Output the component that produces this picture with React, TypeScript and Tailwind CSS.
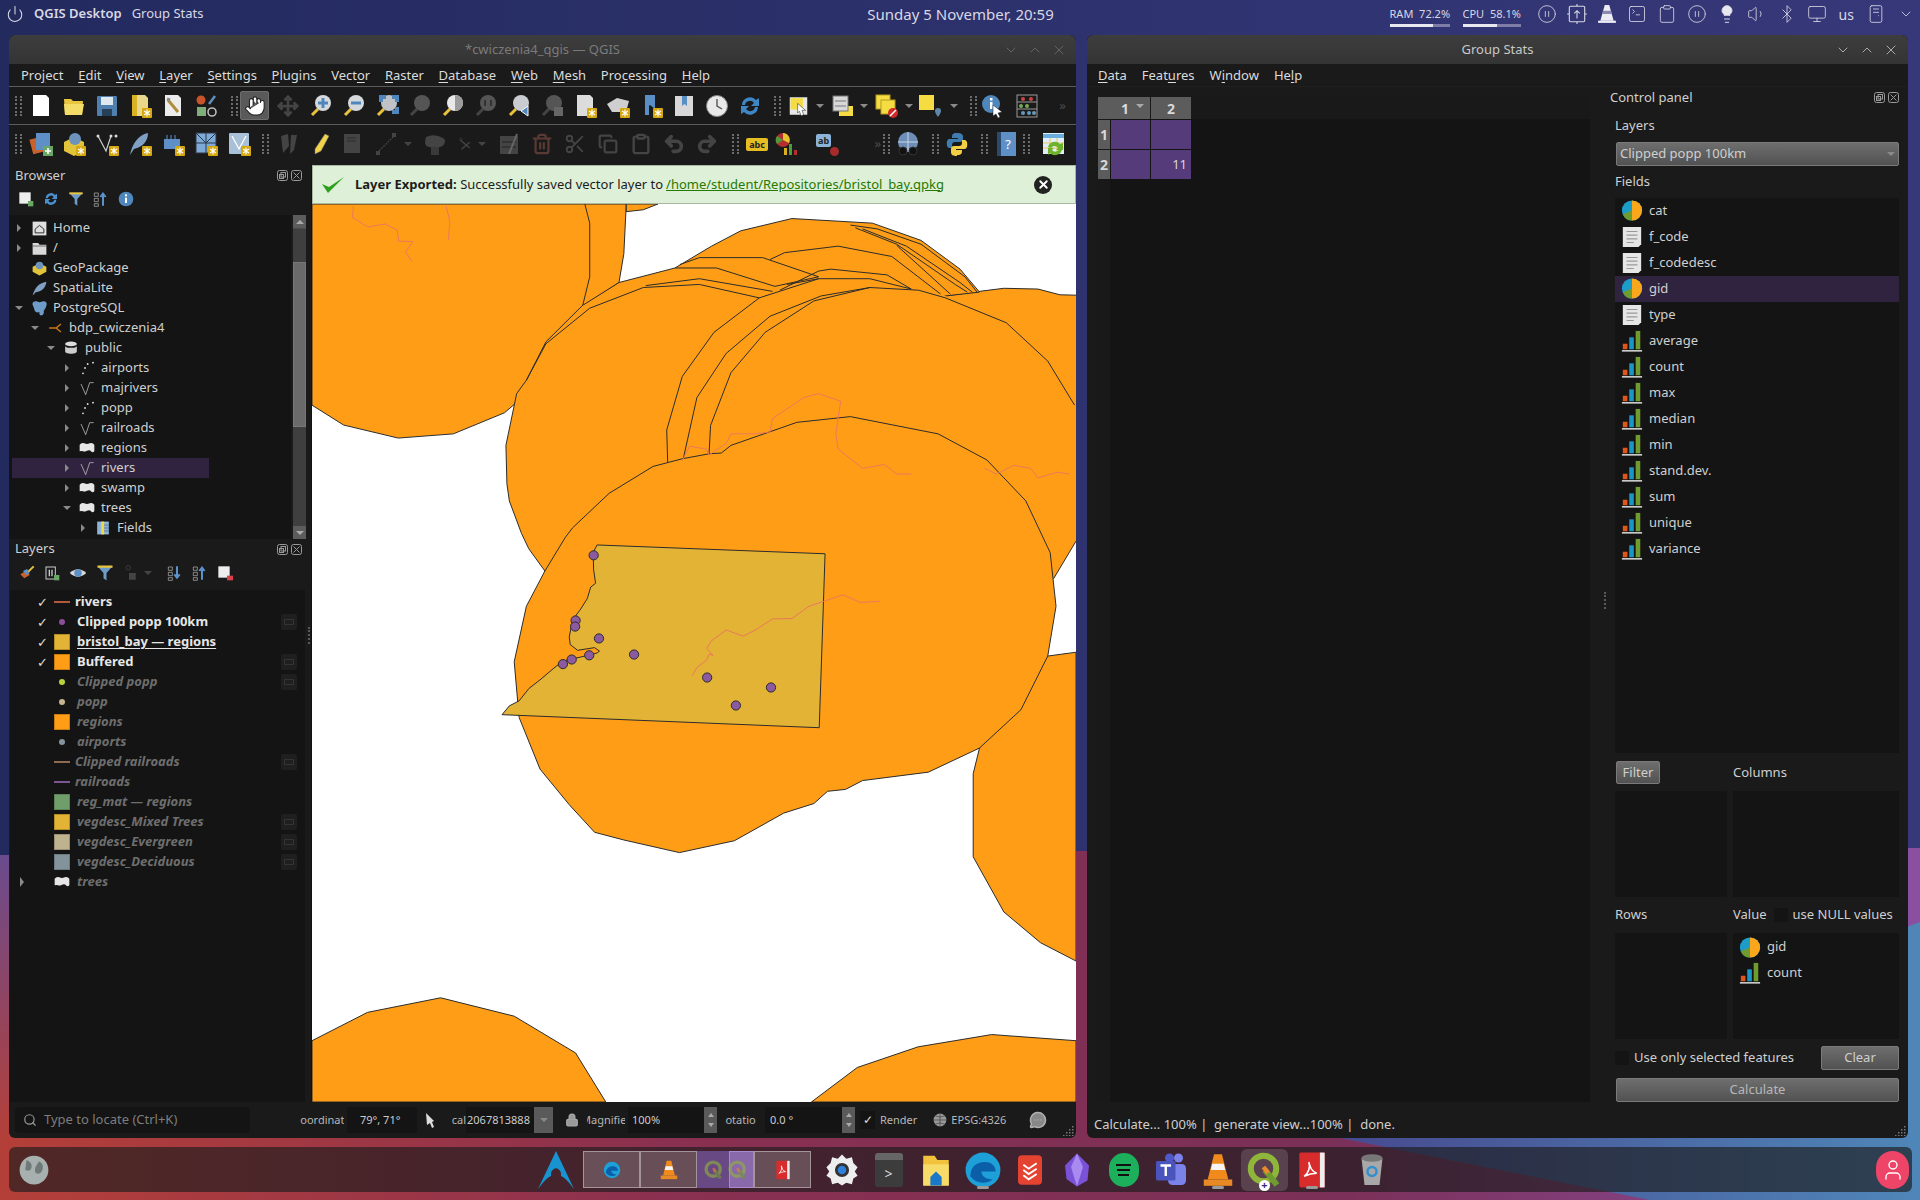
import type { ReactNode } from "react";
import {
  Bluetooth,
  ChevronDown,
  ChevronUp,
  CirclePause,
  Clipboard,
  Copy,
  Hand,
  Lightbulb,
  Lock,
  MessageCircleMore,
  Monitor,
  Move,
  PcCase,
  Power,
  Redo2,
  Scissors,
  Search,
  SquareTerminal,
  Trash2,
  Undo2,
  User,
  Volume1,
  X,
} from "lucide-react";

const dim = "#444444";

const S = ({ children, size = 24, className }: { children: ReactNode; size?: number; className?: string }) => (
  <svg viewBox="0 0 24 24" width={size} height={size} className={className}>
    {children}
  </svg>
);

const Star = () => (
  <g>
    <rect x="14" y="14" width="10" height="10" rx="1" fill="#d6a80f" />
    <path d="M19 15.5v7M16 17l6 4M22 17l-6 4" stroke="#fff" strokeWidth="1.2" />
  </g>
);

const Mag = ({ glass = "#c9ccd0", handle = "#e8c33a", children }: { glass?: string; handle?: string; children?: ReactNode }) => (
  <S>
    <path d="M9 15l-6 6" stroke={handle} strokeWidth="3" />
    <circle cx="14" cy="9" r="8" fill={glass} />
    {children}
  </S>
);

const Doc = ({ fill = "#ececec", children }: { fill?: string; children?: ReactNode }) => (
  <S>
    <path d="M4 1h13l3 3v18H4z" fill={fill} />
    {children}
  </S>
);

const Handle = () => <div className="w-[7px] h-[20px] border-x-2 border-dotted border-[#6c6c6c]" />;

const Slot = ({ w = "w-[33px]", children, end }: { w?: string; children?: ReactNode; end?: boolean }) => (
  <div className={`${w} h-[30px] shrink-0 flex items-center ${end ? "justify-end" : "justify-center"}`}>{children}</div>
);

const Arrow = () => <div className="border-x-[4px] border-x-transparent border-t-[4px] border-t-[#8a8a8a]" />;

const Chevrons = () => <span className="text-[#4c4c4c] text-[13px]">»</span>;

const Pie = () => (
  <S size={23}>
    <circle cx="12" cy="12" r="11" fill="#1c9cc8" />
    <path d="M12 1a11 11 0 0 1 0 22z" fill="#fba71b" />
    <path d="M12 12v11a11 11 0 0 1-10-7z" fill="#6f9c2e" />
  </S>
);

const PageSmall = () => (
  <S size={24}>
    <path d="M2 1h20v19l-3 3H2z" fill="#e6e6e6" />
    <path d="M6 6h12M6 10h12M6 14h12M6 18h8" stroke="#9a9a9a" strokeWidth="1.2" />
  </S>
);

const Bars = () => (
  <S size={24}>
    <rect x="2" y="15" width="5" height="6" fill="#e0561b" />
    <rect x="9" y="8" width="5" height="13" fill="#1b97c6" />
    <rect x="16" y="1" width="5" height="20" fill="#6f9c2e" />
    <rect x="1" y="22" width="22" height="1.5" fill="#eee" />
  </S>
);

const Dots = () => (
  <S size={16}>
    <circle cx="6" cy="20" r="1.4" fill="#ddd" />
    <circle cx="9" cy="12" r="1.4" fill="#ddd" />
    <circle cx="13" cy="6" r="1.4" fill="#ddd" />
    <circle cx="21" cy="4" r="1.4" fill="#ddd" />
  </S>
);

const Vee = () => (
  <S size={16}>
    <path d="M3 6l7 16 6-18 6 0" fill="none" stroke="#bbb" strokeWidth="1.2" />
  </S>
);

const Blob = ({ size = 16 }: { size?: number }) => (
  <S size={size}>
    <path d="M1 7q3-4 7-2t8 0 7 2v10q-3 3-5 0t-6-1-6 1-5 0z" fill="#e6e6e6" />
  </S>
);

const FloatIcons = () => (
  <div className="flex gap-[3px]">
    <svg width="11" height="11" viewBox="0 0 11 11" fill="none" stroke="#9a9a9a">
      <rect x=".5" y=".5" width="10" height="10" rx="2" />
      <rect x="4" y="2.5" width="4.5" height="4.5" />
      <rect x="2.5" y="4.5" width="4" height="4" />
    </svg>
    <svg width="11" height="11" viewBox="0 0 11 11" fill="none" stroke="#9a9a9a">
      <rect x=".5" y=".5" width="10" height="10" rx="2" />
      <path d="M2.5 2.5l6 6M8.5 2.5l-6 6" />
    </svg>
  </div>
);

const Menu = ({ items, className }: { items: [string, string, string][]; className: string }) => (
  <div className={`flex text-[13px] text-[#dcdcdc] ${className}`}>
    {items.map(([a, u, b]) => (
      <span key={a + u + b}>
        {a}
        <span className="underline underline-offset-2">{u}</span>
        {b}
      </span>
    ))}
  </div>
);

const TopBar = () => (
  <div className="h-[35px] flex items-center pb-[7px] text-[13px] text-[#d8d8e4] relative">
    <Power size={18} strokeWidth={1.4} className="ml-[6px] text-[#d8d8e4]" />
    <span className="ml-[10px] font-semibold">QGIS Desktop</span>
    <span className="ml-[10px]">Group Stats</span>
    <span className="ml-[657px] w-[200px] text-center text-[15px] whitespace-nowrap">Sunday 5 November, 20:59</span>
    <div className="ml-[329px] w-[60px] h-[28px] mt-[7px] flex flex-col">
      <span className="text-[11px] leading-[19px] whitespace-nowrap">RAM&nbsp; 72.2%</span>
      <div className="h-[3px] bg-[#7d7da8] mt-[1px]">
        <div className="h-full w-[43px] bg-[#e8e8f0]" />
      </div>
    </div>
    <div className="ml-[13px] w-[58px] h-[28px] mt-[7px] flex flex-col">
      <span className="text-[11px] leading-[19px] whitespace-nowrap">CPU&nbsp; 58.1%</span>
      <div className="h-[3px] bg-[#7d7da8] mt-[1px]">
        <div className="h-full w-[34px] bg-[#e8e8f0]" />
      </div>
    </div>
    <div className="ml-[16px] flex items-center gap-[10px]">
      <CirclePause size={20} strokeWidth={1} />
      <svg width="20" height="22" viewBox="0 0 18 20" fill="none" stroke="#d8d8e4">
        <rect x="2" y="3" width="14" height="14" rx="1" />
        <path d="M9 14V7M6.5 9.5L9 7l2.5 2.5M9 1v2M9 17v2M0 10h2M16 10h2" />
      </svg>
      <svg width="20" height="20" viewBox="0 0 18 18">
        <path d="M7 1h4l4 14H3z" fill="#ececf4" />
        <path d="M5.5 6h7l1 3h-9z" fill="#8a8ab0" />
        <rect x="1" y="15" width="16" height="2" fill="#ececf4" />
      </svg>
      <SquareTerminal size={20} strokeWidth={1} />
      <Clipboard size={20} strokeWidth={1} />
      <CirclePause size={20} strokeWidth={1} />
      <Lightbulb size={20} strokeWidth={1.2} fill="#e8e8f0" />
      <Volume1 size={20} strokeWidth={1} />
      <Bluetooth size={20} strokeWidth={1} />
      <Monitor size={20} strokeWidth={1} />
      <span className="text-[14px] ml-[2px]">us</span>
      <PcCase size={20} strokeWidth={1} className="ml-[2px]" />
      <ChevronDown size={16} strokeWidth={1.2} className="ml-[2px]" />
    </div>
  </div>
);

const TitleBar = ({ title, dimmed }: { title: string; dimmed?: boolean }) => (
  <div className="h-[29px] shrink-0 bg-gradient-to-b from-[#3d3d3d] to-[#343434] rounded-t-md flex items-center relative">
    <span className={`flex-1 text-center text-[13px] ${dimmed ? "text-[#7a7a7a]" : "text-[#c8c8c8]"}`}>{title}</span>
    <div className={`absolute right-[9px] flex gap-[8px] ${dimmed ? "text-[#707070]" : "text-[#c8c8c8]"}`}>
      <ChevronDown size={16} strokeWidth={1.2} />
      <ChevronUp size={16} strokeWidth={1.2} />
      <X size={16} strokeWidth={1.2} />
    </div>
  </div>
);

const Toolbar1 = () => (
  <div className="h-[38px] flex items-center pl-[3px] border-b border-[#5c5c5c]">
    <Slot w="w-[12px]"><Handle /></Slot>
    <Slot><Doc fill="#fff" /></Slot>
    <Slot>
      <S><path d="M2 5h7l2 2h10l-1 14H3z" fill="#e8c53f" /><path d="M2 10h20l-2 11H3z" fill="#f4dc68" /></S>
    </Slot>
    <Slot>
      <S><rect x="2" y="2" width="20" height="20" rx="1" fill="#4f7fae" /><rect x="6" y="3" width="12" height="8" fill="#dfe7ef" /><rect x="7" y="15" width="10" height="7" fill="#283f58" /></S>
    </Slot>
    <Slot>
      <Doc fill="#ead88a"><rect x="4" y="1" width="5" height="21" fill="#d8b425" /><Star /></Doc>
    </Slot>
    <Slot>
      <Doc><path d="M7 6l10 12" stroke="#b08d3a" strokeWidth="3" /><path d="M6 5l3 1" stroke="#888" strokeWidth="3" /></Doc>
    </Slot>
    <Slot>
      <S><circle cx="7" cy="6" r="4.5" fill="#c9532b" /><path d="M15 10l6-8" stroke="#5f8fbe" strokeWidth="2.5" /><rect x="3" y="13" width="9" height="9" fill="#7fae7a" /><circle cx="18" cy="18" r="4" fill="none" stroke="#bbb" strokeWidth="1.6" /></S>
    </Slot>
    <Slot w="w-[16px]" end><Handle /></Slot>
    <Slot>
      <div className="w-[29px] h-[29px] rounded-[2px] bg-[#5a5a5a] border border-[#6d6d6d] flex items-center justify-center">
        <Hand size={22} fill="#fff" stroke="#222" strokeWidth={1.2} />
      </div>
    </Slot>
    <Slot><Move size={22} color={dim} strokeWidth={3} /></Slot>
    <Slot><Mag glass="#d6d9dc"><path d="M14 4v10M9 9h10" stroke="#4f87bd" strokeWidth="3" /></Mag></Slot>
    <Slot><Mag glass="#d6d9dc"><path d="M9 9h10" stroke="#4f87bd" strokeWidth="3" /></Mag></Slot>
    <Slot>
      <Mag glass="#bfc3c7"><path d="M4 1h7v4H8v3H4zM24 1h-7v4h3v3h4zM24 20h-7v-4h3v-3h4z" fill="#4f87bd" /></Mag>
    </Slot>
    <Slot><Mag glass="#555" handle={dim} /></Slot>
    <Slot><Mag glass="#e9e9e9"><path d="M14 1a8 8 0 0 1 0 16z" fill="#9c9c9c" /></Mag></Slot>
    <Slot><Mag glass="#555" handle={dim}><path d="M11 6v6M17 6v6" stroke="#333" strokeWidth="2" /></Mag></Slot>
    <Slot><Mag glass="#c9ccd0"><path d="M21 12l-7 5 7 5z" fill="#4f87bd" stroke="#fff" /></Mag></Slot>
    <Slot><Mag glass="#555" handle={dim}><rect x="14" y="13" width="9" height="9" fill="#666" /></Mag></Slot>
    <Slot><Doc fill="#dcdcdc"><Star /></Doc></Slot>
    <Slot><S><path d="M1 10l10-6 12 3-3 11H6z" fill="#cfcfcf" /><Star /></S></Slot>
    <Slot><S><path d="M6 1h10v14l-5-4-5 4z" fill="#5a8fc5" /><path d="M6 1h4v20H6z" fill="#5a8fc5" /><Star /></S></Slot>
    <Slot><S><path d="M3 2h18v20H3z" fill="#d8d8d8" /><path d="M10 2h5v10l-2.5-2-2.5 2z" fill="#5a8fc5" /></S></Slot>
    <Slot><S><circle cx="12" cy="12" r="10.5" fill="#e8e8e8" stroke="#888" /><path d="M12 5v7l5 3" stroke="#555" fill="none" strokeWidth="1.4" /></S></Slot>
    <Slot><S><path d="M4 11a8 8 0 0 1 14-5l3-2v8h-8l3-3a5 5 0 0 0-9 2zM20 13a8 8 0 0 1-14 5l-3 2v-8h8l-3 3a5 5 0 0 0 9-2z" fill="#3f86c6" /></S></Slot>
    <Slot w="w-[22px]"><Handle /></Slot>
    <Slot w="w-[21px]"><S><rect x="2" y="2" width="20" height="20" fill="#e8e8e8" /><rect x="3" y="3" width="14" height="13" fill="#f5dc42" /><path d="M11 9l9 8-4 0 2 5-3 1-2-5-2 2z" fill="#fff" stroke="#222" strokeWidth=".6" /></S></Slot>
    <Slot w="w-[22px]"><Arrow /></Slot>
    <Slot w="w-[24px]"><S><rect x="8" y="12" width="14" height="10" fill="#f5dc42" /><rect x="2" y="2" width="15" height="15" fill="#d8d8d8" stroke="#777" /><path d="M4 7h11M4 12h11" stroke="#777" /></S></Slot>
    <Slot w="w-[18px]"><Arrow /></Slot>
    <Slot w="w-[28px]"><S><rect x="1" y="1" width="14" height="14" fill="#f5dc42" stroke="#b59b1e" /><rect x="6" y="6" width="14" height="14" fill="#f5dc42" stroke="#b59b1e" /><circle cx="18" cy="19" r="5" fill="#d02a2a" /><path d="M15 22l6-6" stroke="#fff" strokeWidth="1.4" /></S></Slot>
    <Slot w="w-[16px]"><Arrow /></Slot>
    <Slot w="w-[26px]"><S><rect x="1" y="1" width="15" height="15" fill="#f5dc42" /><path d="M20 14a3 3 0 0 1 3 3c0 2-3 6-3 6s-3-4-3-6a3 3 0 0 1 3-3z" fill="#5f87a8" /></S></Slot>
    <Slot w="w-[22px]"><Arrow /></Slot>
    <Slot w="w-[16px]"><Handle /></Slot>
    <Slot w="w-[24px]"><S><circle cx="10" cy="10" r="9" fill="#4f87bd" /><rect x="9" y="8" width="2.5" height="7" fill="#fff" /><rect x="9" y="4" width="2.5" height="2.5" fill="#fff" /><path d="M12 11l9 7-4 1 2 4-2 1-2-4-3 2z" fill="#fff" stroke="#222" strokeWidth=".5" /></S></Slot>
    <Slot w="w-[44px]">
      <S><rect x="2" y="1" width="20" height="22" fill="none" stroke="#999" /><path d="M2 8h20M2 15h20" stroke="#999" /><circle cx="8" cy="5" r="2" fill="#c44" /><circle cx="16" cy="5" r="2" fill="#c44" /><circle cx="6" cy="12" r="2" fill="#7a5" /><circle cx="12" cy="12" r="2" fill="#7a5" /><circle cx="8" cy="19" r="2" fill="#69b" /><circle cx="14" cy="19" r="2" fill="#69b" /><circle cx="19" cy="19" r="2" fill="#69b" /></S>
    </Slot>
    <Slot w="w-[27px]"><Chevrons /></Slot>
  </div>
);

const Toolbar2 = () => (
  <div className="h-[41px] pb-[2px] flex items-center pl-[3px] border-t border-[#5c5c5c] -mt-[1px]">
    <Slot w="w-[12px]"><Handle /></Slot>
    <Slot><S><rect x="2" y="6" width="13" height="15" fill="#c9622a" transform="rotate(-15 8 13)" /><rect x="7" y="1" width="14" height="17" fill="#5e8fc7" /><rect x="14" y="14" width="10" height="10" fill="#6aa765" /><path d="M19 16v6M16 19h6" stroke="#fff" strokeWidth="1.6" /></S></Slot>
    <Slot><S><path d="M2 10l10-5 10 5v9l-10 5-10-5z" fill="#e2c43a" /><circle cx="13" cy="7" r="6" fill="#6d93bd" /><Star /></S></Slot>
    <Slot><S><path d="M3 4l8 15 5-15" fill="none" stroke="#cfcfcf" strokeWidth="1.2" /><circle cx="3" cy="4" r="1.5" fill="#ddd" /><circle cx="16" cy="4" r="1.5" fill="#ddd" /><circle cx="21" cy="4" r="1.5" fill="#ddd" /><Star /></S></Slot>
    <Slot><S><path d="M2 23C4 12 10 3 20 1c0 8-5 14-14 16z" fill="#7f9fc3" /><Star /></S></Slot>
    <Slot><S><rect x="3" y="7" width="16" height="10" fill="#5e8fc7" /><path d="M6 3v4M10 3v4M14 3v4" stroke="#5e8fc7" /><Star /></S></Slot>
    <Slot><S><rect x="2" y="1" width="20" height="20" fill="#7faad6" stroke="#334" /><path d="M2 11h20M12 1v20M2 1l10 10M22 1l-10 10" stroke="#26384d" /><Star /></S></Slot>
    <Slot><S><rect x="2" y="1" width="20" height="21" rx="1" fill="#a9c0d9" /><path d="M5 4l7 13 7-13" stroke="#fff" fill="none" strokeWidth="1.3" /><Star /></S></Slot>
    <Slot w="w-[20px]"><Handle /></Slot>
    <Slot w="w-[27px]"><S><path d="M4 4l7-2 1 12-6 7zM14 3l6 0-3 15-4 4z" fill={dim} /></S></Slot>
    <Slot w="w-[36px]"><S><path d="M7 22l0-5L17 2l4 2-8 15z" fill="#f0d34a" stroke="#777" strokeWidth=".5" /></S></Slot>
    <Slot w="w-[30px]"><S><rect x="3" y="2" width="16" height="19" fill={dim} /><path d="M6 6h9M6 9h9" stroke="#2a2a2a" /></S></Slot>
    <Slot w="w-[36px]"><S><path d="M3 21L21 3" stroke={dim} strokeWidth="1.2" strokeDasharray="2 1" /><rect x="2" y="19" width="4" height="4" fill={dim} /><rect x="18" y="1" width="4" height="4" fill={dim} /></S></Slot>
    <Slot w="w-[8px]"><div className="border-x-[4px] border-x-transparent border-t-[4px] border-t-[#444]" /></Slot>
    <Slot w="w-[46px]"><S><path d="M3 5q6-3 12-1t7 4q0 6-5 7t-11 0-3-10z" fill={dim} /><rect x="8" y="15" width="8" height="8" fill="#3a3a3a" /></S></Slot>
    <Slot w="w-[14px]"><S><path d="M4 5l16 14M20 9l-14 12" stroke={dim} strokeWidth="2.4" /><circle cx="5" cy="4" r="2" fill="none" stroke={dim} /></S></Slot>
    <Slot w="w-[20px]"><div className="border-x-[4px] border-x-transparent border-t-[4px] border-t-[#444]" /></Slot>
    <Slot><S><rect x="3" y="4" width="18" height="18" fill={dim} /><path d="M5 10h14M5 15h14" stroke="#222" /><path d="M12 22L20 2" stroke="#666" strokeWidth="2" /></S></Slot>
    <Slot><Trash2 size={22} color="#5a3a34" strokeWidth={2.4} /></Slot>
    <Slot><Scissors size={22} color={dim} /></Slot>
    <Slot><Copy size={20} color={dim} strokeWidth={2.6} /></Slot>
    <Slot><Clipboard size={22} color={dim} strokeWidth={2.6} /></Slot>
    <Slot><Undo2 size={22} color={dim} strokeWidth={4} /></Slot>
    <Slot><Redo2 size={22} color={dim} strokeWidth={4} /></Slot>
    <Slot w="w-[24px]"><Handle /></Slot>
    <Slot w="w-[14px]">
      <div className="shrink-0 h-[13px] px-[3px] ml-[6px] bg-[#e6bd22] rounded-[2px] text-[9px] leading-[13px] font-bold text-[#222]">abc</div>
    </Slot>
    <Slot w="w-[50px]"><S><circle cx="9" cy="8" r="7" fill="#b52f2f" /><path d="M9 1a7 7 0 0 1 6 10L9 8z" fill="#e6c42b" /><path d="M9 8L3 12a7 7 0 0 1 0-8z" fill="#4f9b3b" /><rect x="10" y="16" width="3" height="7" fill="#d8b020" /><rect x="15" y="12" width="3" height="11" fill="#4f9b3b" /><rect x="20" y="18" width="3" height="5" fill="#b52f2f" /></S></Slot>
    <Slot w="w-[34px]">
      <div className="relative w-[24px] h-[24px]">
        <div className="absolute left-0 top-[2px] h-[13px] px-[2px] bg-[#8cb4d8] rounded-[2px] text-[9px] leading-[13px] font-bold text-[#222]">ab</div>
        <div className="absolute right-[1px] bottom-0 w-[9px] h-[9px] rounded-full bg-[#a62b2b]" />
      </div>
    </Slot>
    <Slot w="w-[36px]" end><Chevrons /></Slot>
    <Slot w="w-[10px]"><Handle /></Slot>
    <Slot w="w-[34px]"><S><circle cx="12" cy="10" r="10" fill="#6d8fb7" /><path d="M2 10h20M12 0v20" stroke="#c9d6e5" /><circle cx="7" cy="19" r="4" fill="#111" stroke="#333" /><circle cx="17" cy="19" r="4" fill="#111" stroke="#333" /></S></Slot>
    <Slot w="w-[20px]"><Handle /></Slot>
    <Slot w="w-[24px]"><S><path d="M12 1c-5 0-5 2-5 5h6v1H4c-3 0-3 9 0 9h3v-3c0-2 1-3 3-3h5c2 0 3-1 3-3V5c0-3-2-4-6-4z" fill="#3f7cb0" /><path d="M12 23c5 0 5-2 5-5h-6v-1h9c3 0 3-9 0-9h-3v3c0 2-1 3-3 3H9c-2 0-3 1-3 3v3c0 3 2 4 6 4z" fill="#f2cf45" /></S></Slot>
    <Slot w="w-[30px]"><Handle /></Slot>
    <Slot w="w-[14px]">
      <div className="shrink-0 w-[19px] h-[24px] bg-[#5e8fc7] border-l-[4px] border-[#2c4a6b] text-white text-[13px] leading-[24px] text-center">?</div>
    </Slot>
    <Slot w="w-[26px]"><Handle /></Slot>
    <Slot w="w-[30px]"><S><rect x="1" y="1" width="21" height="21" fill="#dfeefa" /><path d="M1 2h21v4H1z" fill="#6aaee0" /><path d="M8 6v16M15 6v16M1 11h21M1 16h21" stroke="#eec95a" /><path d="M6 15a7 7 0 0 1 12-3l3-1v7h-7l2-2a4 4 0 0 0-7 0zM20 17a7 7 0 0 1-12 4l-2 2v-7h6l-2 2a4 4 0 0 0 7-1z" fill="#6eb32c" /></S></Slot>
  </div>
);

const Row = ({ level, arrow, icon, text, selected }: { level: string; arrow?: "r" | "d"; icon: ReactNode; text: string; selected?: boolean }) => (
  <div className={`h-5 flex items-center text-[13px] text-[#d0d0d0] ${selected ? "bg-[#30233f] w-[197px]" : ""}`}>
    <div className={`${level} shrink-0 flex justify-end pr-[2px]`}>
      {arrow === "r" && <div className="border-y-[4px] border-y-transparent border-l-[4px] border-l-[#8a8a8a] mr-[1px]" />}
      {arrow === "d" && <div className="border-x-[4px] border-x-transparent border-t-[4px] border-t-[#8a8a8a] -mr-[1px]" />}
    </div>
    <div className="w-[20px] ml-[5px] shrink-0 flex justify-center">{icon}</div>
    <span className="ml-[4px] whitespace-nowrap">{text}</span>
  </div>
);

const BrowserPanel = () => (
  <div className="h-[374px] flex flex-col">
    <div className="h-[21px] flex items-center justify-between pl-[6px] pr-[9px] text-[13px] text-[#cfcfcf]">
      Browser
      <FloatIcons />
    </div>
    <div className="h-[26px] flex items-center gap-[9px] pl-[9px]">
      <S size={16}><rect x="2" y="2" width="17" height="17" fill="#eee" /><rect x="15" y="15" width="8" height="8" fill="#6aa765" /></S>
      <S size={16}><path d="M4 11a8 8 0 0 1 14-5l3-2v8h-8l3-3a5 5 0 0 0-9 2zM20 13a8 8 0 0 1-14 5l-3 2v-8h8l-3 3a5 5 0 0 0 9-2z" fill="#4a8fcf" /></S>
      <S size={16}><path d="M2 3h20l-8 9v10l-4-3v-7z" fill="#6d9cc9" /><rect x="2" y="2" width="20" height="3" fill="#e8c53f" /></S>
      <S size={16}><path d="M2 3h6v5H2zM2 11h6v5H2zM2 19h6v4H2z" fill="none" stroke="#bbb" /><path d="M15 22V6M11 9l4-5 4 5" stroke="#5b92c9" strokeWidth="3" fill="none" /></S>
      <S size={16}><circle cx="12" cy="12" r="11" fill="#4f87bd" /><rect x="10.5" y="10" width="3" height="8" fill="#fff" /><rect x="10.5" y="5" width="3" height="3" fill="#fff" /></S>
    </div>
    <div className="flex-1 flex min-h-0 mt-[3px]">
      <div className="flex-1 overflow-hidden pl-[3px] pt-[3px] bg-[#141414] min-w-0">
        <Row level="w-[12px]" arrow="r" icon={<S size={15}><rect x="1" y="1" width="22" height="22" fill="#e0e0e0" /><path d="M5 13l7-6 7 6v6H5z" fill="none" stroke="#222" strokeWidth="1.5" /></S>} text="Home" />
        <Row level="w-[12px]" arrow="r" icon={<S size={15}><path d="M1 3h9l2 3h11v16H1z" fill="#d8d8d8" /><path d="M1 8h22" stroke="#333" /></S>} text="/" />
        <Row level="w-[12px]" icon={<S size={15}><path d="M1 9l11-5 11 5v8l-11 6-11-6z" fill="#e2c43a" /><circle cx="12" cy="7" r="6" fill="#6d93bd" /></S>} text="GeoPackage" />
        <Row level="w-[12px]" icon={<S size={15}><path d="M1 23C4 12 10 3 23 1c-1 9-6 15-17 17z" fill="#7f9fc3" /></S>} text="SpatiaLite" />
        <Row level="w-[12px]" arrow="d" icon={<S size={17}><path d="M2 6q0-5 7-4l3 1 4-1q7-1 6 5-1 5-4 8v4q-1 3-4 3-3-1-2-5-3 1-5 0t-3-6z" fill="#6d9cc9" /></S>} text="PostgreSQL" />
        <Row level="w-[28px]" arrow="d" icon={<S size={14}><path d="M2 12h12M22 5l-8 7 8 7" stroke="#c97a18" strokeWidth="2.4" fill="none" /></S>} text="bdp_cwiczenia4" />
        <Row level="w-[44px]" arrow="d" icon={<S size={14}><ellipse cx="12" cy="5" rx="10" ry="4" fill="#ddd" /><path d="M2 8v10c0 5 20 5 20 0V8c0 5-20 5-20 0z" fill="#ccc" /></S>} text="public" />
        <Row level="w-[60px]" arrow="r" icon={<Dots />} text="airports" />
        <Row level="w-[60px]" arrow="r" icon={<Vee />} text="majrivers" />
        <Row level="w-[60px]" arrow="r" icon={<Dots />} text="popp" />
        <Row level="w-[60px]" arrow="r" icon={<Vee />} text="railroads" />
        <Row level="w-[60px]" arrow="r" icon={<Blob />} text="regions" />
        <Row level="w-[60px]" arrow="r" icon={<Vee />} text="rivers" selected />
        <Row level="w-[60px]" arrow="r" icon={<Blob />} text="swamp" />
        <Row level="w-[60px]" arrow="d" icon={<Blob />} text="trees" />
        <Row level="w-[76px]" arrow="r" icon={<S size={14}><rect x="2" y="1" width="20" height="22" fill="#8fb4d9" /><rect x="9" y="1" width="5" height="22" fill="#f0d84a" /><path d="M14 7h8M14 12h8M14 17h8" stroke="#2a4a6b" /></S>} text="Fields" />
      </div>
      <div className="w-[13px] ml-[2px] mr-[5px] flex flex-col bg-[#4c4c4c]">
        <div className="h-[13px] bg-[#5c5c5c] flex items-center justify-center">
          <div className="border-x-[4px] border-x-transparent border-b-[4px] border-b-[#aaa]" />
        </div>
        <div className="h-[33px] mt-[1px] bg-[#3f3f3f]" />
        <div className="h-[165px] bg-[#6a6a6a] border border-[#777]" />
        <div className="flex-1 bg-[#3f3f3f]" />
        <div className="h-[13px] bg-[#5c5c5c] flex items-center justify-center">
          <div className="border-x-[4px] border-x-transparent border-t-[4px] border-t-[#aaa]" />
        </div>
      </div>
    </div>
  </div>
);

const swatch = "w-4 h-4 border";

const LayerRow = ({ on, icon, text, active, underline, chip, arrow, tight }: { on?: boolean; icon: ReactNode; text: string; active?: boolean; underline?: boolean; chip?: boolean; arrow?: boolean; tight?: boolean }) => (
  <div className="h-5 flex items-center relative">
    <div className="w-[26px] pl-[10px] shrink-0">
      {arrow && <div className="border-y-[5px] border-y-transparent border-l-[4px] border-l-[#8a8a8a]" />}
    </div>
    <div className="w-[18px] shrink-0 pl-[1px] text-[13px] text-[#ddd] leading-none">{on ? "✓" : ""}</div>
    <div className="w-[16px] shrink-0 flex justify-center">{icon}</div>
    <span className={`${tight ? "ml-[5px]" : "ml-[7px]"} text-[13px] font-bold whitespace-nowrap ${active ? "text-[#e6e6e6]" : "text-[#6e6e6e] italic"} ${underline ? "underline underline-offset-2" : ""}`}>
      {text}
    </span>
    {chip && (
      <div className="absolute left-[271px] w-4 h-4 rounded-[2px] bg-[#1f1f1f] flex items-center justify-center">
        <div className="w-[10px] h-[6px] border border-[#333]" />
      </div>
    )}
  </div>
);

const dot = (c: string) => <div className={`w-[6px] h-[6px] rounded-full ${c}`} />;
const line = (c: string) => <div className={`w-4 h-[2px] ${c}`} />;

const LayersPanel = () => (
  <div className="flex-1 flex flex-col min-h-0 relative">
    <div className="h-[20px] flex items-center justify-between pl-[6px] pr-[9px] text-[13px] text-[#cfcfcf]">
      Layers
      <FloatIcons />
    </div>
    <div className="h-[28px] flex items-center gap-[9px] pl-[10px]">
      <S size={16}><path d="M2 14l10-6 4 7-8 5z" fill="#c9622a" /><path d="M6 9l6-3 4 6-5 3z" fill="#5e8fc7" /><path d="M14 10l8-8" stroke="#e8c53f" strokeWidth="3" /></S>
      <S size={16}><rect x="3" y="3" width="14" height="18" fill="none" stroke="#ccc" strokeWidth="1.5" /><path d="M8 7v10M12 7v10" stroke="#ccc" strokeWidth="2" /><rect x="15" y="15" width="8" height="8" fill="#6aa765" /></S>
      <S size={18}><path d="M1 12q11-10 22 0-11 10-22 0z" fill="#d8d8d8" /><circle cx="12" cy="12" r="5" fill="#5b8fc5" /></S>
      <S size={18}><path d="M2 3h20l-8 9v10l-4-3v-7z" fill="#6d9cc9" /><rect x="2" y="2" width="20" height="3" fill="#e8c53f" /></S>
      <S size={18}><circle cx="7" cy="5" r="3" fill="none" stroke="#444" /><rect x="8" y="12" width="9" height="9" fill="#444" /></S>
      <div className="-ml-[6px] mr-[6px]"><div className="border-x-[4px] border-x-transparent border-t-[4px] border-t-[#444]" /></div>
      <S size={16}><path d="M2 3h6v5H2zM2 11h6v5H2zM2 19h6v4H2z" fill="none" stroke="#bbb" /><path d="M15 2v16M11 14l4 5 4-5" stroke="#5b92c9" strokeWidth="3" fill="none" /></S>
      <S size={16}><path d="M2 3h6v5H2zM2 11h6v5H2zM2 19h6v4H2z" fill="none" stroke="#bbb" /><path d="M15 22V6M11 9l4-5 4 5" stroke="#5b92c9" strokeWidth="3" fill="none" /></S>
      <S size={16}><rect x="2" y="2" width="17" height="17" fill="#eee" /><rect x="15" y="16" width="9" height="7" fill="#d8404a" /></S>
    </div>
    <div className="flex-1 mt-[3px] pt-[2px] mr-[6px] ml-[1px] bg-[#141414]">
      <LayerRow on active tight icon={line("bg-[#b3593d]")} text="rivers" />
      <LayerRow on active chip icon={dot("bg-[#8b4f9a]")} text="Clipped popp 100km" />
      <LayerRow on active underline icon={<div className={`${swatch} bg-[#e2b335] border-[#b38d25]`} />} text="bristol_bay — regions" />
      <LayerRow on active chip icon={<div className={`${swatch} bg-[#ff9e16] border-[#c97c10]`} />} text="Buffered" />
      <LayerRow chip icon={dot("bg-[#b7d13f]")} text="Clipped popp" />
      <LayerRow icon={dot("bg-[#c4b590]")} text="popp" />
      <LayerRow icon={<div className={`${swatch} bg-[#ff9e16] border-[#c97c10]`} />} text="regions" />
      <LayerRow icon={dot("bg-[#84939c]")} text="airports" />
      <LayerRow chip tight icon={line("bg-[#8f6a50]")} text="Clipped railroads" />
      <LayerRow tight icon={line("bg-[#7c5490]")} text="railroads" />
      <LayerRow icon={<div className={`${swatch} bg-[#6f9e6a] border-[#5b8357]`} />} text="reg_mat — regions" />
      <LayerRow chip icon={<div className={`${swatch} bg-[#e2b335] border-[#b38d25]`} />} text="vegdesc_Mixed Trees" />
      <LayerRow chip icon={<div className={`${swatch} bg-[#bfb28f] border-[#9a8f72]`} />} text="vegdesc_Evergreen" />
      <LayerRow chip icon={<div className={`${swatch} bg-[#83939b] border-[#6b7a81]`} />} text="vegdesc_Deciduous" />
      <LayerRow arrow icon={<Blob size={16} />} text="trees" />
    </div>
    <div className="absolute right-[1px] top-[88px] w-[2px] h-[17px] border-l-2 border-dotted border-[#5a5a5a]" />
  </div>
);

const Pg = ({ points, fill = "#ff9e16", stroke = "#2c2c2c" }: { points: string; fill?: string; stroke?: string }) => (
  <polygon points={points} fill={fill} stroke={stroke} strokeWidth="1" vectorEffect="non-scaling-stroke" />
);
const Ln = ({ points, color = "#2c2c2c" }: { points: string; color?: string }) => (
  <polyline points={points} fill="none" stroke={color} strokeWidth="1" vectorEffect="non-scaling-stroke" />
);

const sites = [
  [578, 917], [541, 1087], [540, 1103], [589, 1134], [569, 1178], [533, 1189],
  [515, 1201], [661, 1176], [811, 1236], [942, 1262], [870, 1309],
];

const river = "#ea7a5a";

const MapCanvas = () => (
  <svg viewBox="0 0 1568 2344" preserveAspectRatio="none" className="block w-full h-full bg-white">
    <Pg points="0,0 645,0 640,130 630,205 555,268 418,520 395,545 290,600 177,611 65,577 0,525" />
    <Ln points="560,0 570,50 570,190 555,268" />
    <Pg points="645,0 645,20 680,15 710,0" />
    <Pg stroke="none" points="1300,240 1370,228 1420,220 1490,222 1535,237 1568,238 1568,880 1522,978 1400,1000 1200,600" />
    <Ln points="1300,240 1370,228 1420,220 1490,222 1535,237 1568,238" />
    <Ln points="1568,880 1522,978" />
    <Pg points="1510,1180 1568,1170 1568,1976 1495,1928 1420,1848 1357,1704 1357,1487 1370,1420 1400,1300" />
    <Pg points="745,167 820,110 880,70 985,38 1150,50 1250,95 1330,170 1370,230 1300,240 950,400" />
    <Ln points="755,158 795,140 925,140 1040,190" />
    <Ln points="940,145 970,127 1080,110 1190,137 1290,235" />
    <Ln points="1105,55 1160,65 1250,105 1340,190 1365,230" />
    <Ln points="1115,62 1200,105 1320,210 1345,230" />
    <Ln points="1130,65 1220,110 1330,205 1355,230" />
    <Ln points="1200,108 1310,235" />
    <Pg stroke="none" points="398,630 420,495 440,460 480,360 555,265 630,205 745,167 830,167 950,215 1040,190 1145,190 1300,240 1425,310 1510,410 1565,525 1300,800 1000,900 478,958 445,900 430,860 405,775 400,730" />
    <Ln points="478,958 445,900 430,860 405,775 400,730 398,630 420,495 440,460 480,360 555,265 630,205 745,167 830,167 950,215 1040,190" />
    <Ln points="685,213 795,195 945,228" />
    <Ln points="480,365 570,272 680,218 795,210 918,245" />
    <Ln points="440,460 480,365" />
    <Ln points="960,225 1040,175 1065,170 1180,185 1230,222" />
    <Ln points="975,210 1040,195 1145,195 1230,222" />
    <Ln points="730,675 728,590 760,450 825,335 918,245 1040,195" />
    <Ln points="762,665 790,505 850,390 940,293 1045,240 1145,218" />
    <Ln points="815,650 818,578 860,440 930,335 1030,253 1145,218 1245,225 1300,245 1425,310 1510,410 1565,525" />
    <Pg points="478,958 520,870 535,845 610,755 700,685 760,665 815,652 840,650 860,630 995,570 1105,555 1285,600 1385,668 1465,775 1515,910 1527,1050 1510,1180 1455,1320 1370,1420 1265,1483 1130,1505 1095,1528 1058,1533 1030,1565 968,1590 867,1662 754,1693 640,1660 580,1640 528,1568 468,1475 425,1340 415,1195 440,1050" />
    <Pg points="0,2184 114,2110 264,2072 415,2120 541,2216 603,2344 0,2344" />
    <Pg points="1025,2344 1119,2254 1244,2200 1395,2168 1568,2184 1568,2344" />
    <Pg fill="#e2b335" points="390,1333 405,1310 425,1297 445,1265 470,1240 495,1213 515,1193 560,1180 585,1172 590,1167 580,1158 545,1165 530,1150 528,1130 535,1085 550,1060 565,1030 572,1000 582,990 578,955 577,910 585,890 1053,913 1041,1367" />
    <Ln color={river} points="780,1232 790,1210 810,1190 815,1175 823,1178 810,1160 820,1140 850,1112 885,1128 910,1112 945,1083 985,1082 1020,1050 1055,1035 1090,1020 1125,1040 1165,1037" />
    <Ln color={river} points="85,5 83,35 115,60 150,52 175,68 178,97 207,98 192,125 205,150" />
    <Ln color={river} points="275,5 283,45 280,93" />
    <Ln color={river} points="760,670 775,632 810,640 815,655 850,625 860,600 910,600 940,595 945,560 1010,505 1040,495 1085,515 1075,600 1080,640 1130,690 1175,680 1200,705 1230,705" />
    <Ln color={river} points="1380,690 1405,705 1440,682 1475,690 1490,715 1530,700 1555,705" />
    {sites.map(([x, y]) => (
      <ellipse key={`${x}-${y}`} cx={x} cy={y} rx="9.5" ry="12" fill="#8b5a9f" stroke="#2c2c2c" strokeWidth="1" vectorEffect="non-scaling-stroke" />
    ))}
  </svg>
);

const MessageBar = () => (
  <div className="h-[39px] shrink-0 bg-[#dff0d8] border border-[#a8b8a2] flex items-center text-[13px] text-[#1c1c1c]">
    <svg width="24" height="18" viewBox="0 0 24 18" className="ml-[8px]">
      <path d="M1 8l6 9L23 1 8 11z" fill="#2ea01f" />
    </svg>
    <span className="ml-[10px] font-bold">Layer Exported:</span>
    <span className="ml-[3.5px]">Successfully saved vector layer to</span>
    <span className="ml-[3px] text-[#267a00] underline">/home/student/Repositories/bristol_bay.qpkg</span>
    <div className="ml-auto mr-[23px] w-[18px] h-[18px] rounded-full bg-[#222] flex items-center justify-center">
      <X size={13} color="#fff" strokeWidth={3.5} />
    </div>
  </div>
);

const Spin = () => (
  <div className="w-[13px] h-[26px] bg-[#5a5a5a] flex flex-col items-center justify-center gap-[6px]">
    <div className="border-x-[3px] border-x-transparent border-b-[4px] border-b-[#aaa]" />
    <div className="border-x-[3px] border-x-transparent border-t-[4px] border-t-[#aaa]" />
  </div>
);

const Clip = ({ w, text }: { w: string; text: string }) => (
  <div className={`${w} shrink-0 overflow-hidden flex justify-center whitespace-nowrap`}>{text}</div>
);

const Grip = () => (
  <svg width="12" height="12" viewBox="0 0 12 12" className="text-[#777]">
    {[[10, 2], [7, 5], [10, 5], [4, 8], [7, 8], [10, 8], [1, 11], [4, 11], [7, 11], [10, 11]].map(([x, y]) => (
      <rect key={`${x}${y}`} x={x} y={y} width="1.5" height="1.5" fill="currentColor" />
    ))}
  </svg>
);

const QgisStatus = () => (
  <div className="h-[36px] shrink-0 flex items-center text-[11px] text-[#b8b8b8] pl-[6px]">
    <div className="w-[235px] h-[26px] bg-[#141414] flex items-center rounded-sm">
      <Search size={14} className="ml-[8px] text-[#999]" />
      <span className="ml-[7px] text-[13px] text-[#7d7d7d] whitespace-nowrap">Type to locate (Ctrl+K)</span>
    </div>
    <Clip w="ml-[50px] w-[44px]" text="Coordinate" />
    <div className="ml-[3px] w-[70px] h-[26px] bg-[#141414] flex items-center pl-[13px] text-[#ccc]">79°, 71°</div>
    <svg width="12" height="18" viewBox="0 0 12 18" className="ml-[7px]">
      <path d="M2 2l8 8-2 1 2 5-2 1-2-5-3 2z" fill="#ddd" />
    </svg>
    <Clip w="ml-[16px] w-[14px]" text="Scale" />
    <div className="w-[87px] h-[26px] bg-[#141414] flex items-center justify-between pl-[1px] text-[#ccc]">
      2067813888
      <div className="w-[19px] h-full bg-[#5a5a5a] flex items-center justify-center"><Arrow /></div>
    </div>
    <Lock size={14} className="ml-[12px] text-[#aaa]" fill="#999" />
    <Clip w="ml-[8px] w-[38px]" text="Magnifier" />
    <div className="ml-[3px] w-[89px] h-[26px] bg-[#141414] flex items-center justify-between pl-[4px] text-[#ccc]">100%<Spin /></div>
    <Clip w="ml-[8px] w-[31px]" text="Rotation" />
    <div className="ml-[9px] w-[90px] h-[26px] bg-[#141414] flex items-center justify-between pl-[5px] text-[#ccc]">0.0 °<Spin /></div>
    <div className="ml-[5px] w-[15px] h-[18px] bg-[#141414] text-center text-[12px] text-[#ddd]">✓</div>
    <span className="ml-[5px]">Render</span>
    <S size={14} className="ml-[16px]"><circle cx="12" cy="12" r="11" fill="#999" /><path d="M1 12h22M12 1v22M4 5q8 4 16 0M4 19q8-4 16 0" stroke="#333" fill="none" /></S>
    <span className="ml-[4px]">EPSG:4326</span>
    <MessageCircleMore size={18} className="ml-[23px] text-[#b0b0b0]" fill="#888" />
    <div className="ml-auto mr-[2px] self-end mb-[2px]"><Grip /></div>
  </div>
);

const QgisWindow = () => (
  <div className="w-[1067px] h-[1103px] bg-[#1a1a1a] rounded-md flex flex-col overflow-hidden">
    <TitleBar title="*cwiczenia4_qgis — QGIS" dimmed />
    <Menu
      className="h-[23px] items-center pl-[12px] pt-[1px] gap-[14.7px] shrink-0 border-b border-[#5c5c5c] text-[13px]"
      items={[
        ["Pro", "j", "ect"], ["", "E", "dit"], ["", "V", "iew"], ["", "L", "ayer"], ["", "S", "ettings"], ["", "P", "lugins"],
        ["Vect", "o", "r"], ["", "R", "aster"], ["", "D", "atabase"], ["", "W", "eb"], ["", "M", "esh"], ["Pro", "c", "essing"], ["", "H", "elp"],
      ]}
    />
    <Toolbar1 />
    <Toolbar2 />
    <div className="flex-1 flex min-h-0">
      <div className="w-[302px] shrink-0 flex flex-col">
        <BrowserPanel />
        <LayersPanel />
      </div>
      <div className="flex-1 flex flex-col min-w-0 border-l border-[#111]">
        <MessageBar />
        <div className="flex-1 min-h-0"><MapCanvas /></div>
      </div>
    </div>
    <QgisStatus />
  </div>
);

const FieldRow = ({ icon, text, selected }: { icon: ReactNode; text: string; selected?: boolean }) => (
  <div className={`h-[26px] flex items-center pl-[6px] text-[13px] text-[#d0d0d0] ${selected ? "bg-[#30233f]" : ""}`}>
    <div className="w-[22px] flex justify-center">{icon}</div>
    <span className="ml-[6px]">{text}</span>
  </div>
);

const fields: [ReactNode, string][] = [
  [<Pie />, "cat"], [<PageSmall />, "f_code"], [<PageSmall />, "f_codedesc"], [<Pie />, "gid"], [<PageSmall />, "type"],
  [<Bars />, "average"], [<Bars />, "count"], [<Bars />, "max"], [<Bars />, "median"], [<Bars />, "min"],
  [<Bars />, "stand.dev."], [<Bars />, "sum"], [<Bars />, "unique"], [<Bars />, "variance"],
];

const btn = "bg-gradient-to-b from-[#6e6e6e] to-[#525252] border border-[#7a7a7a] rounded-[2px] flex items-center justify-center";

const ControlPanel = () => (
  <div className="w-[318px] shrink-0 flex flex-col pt-[1px] pl-[25px] pr-[9px] text-[13px] text-[#cfcfcf] relative">
    <div className="-ml-[5px] h-5 flex items-center justify-between">
      Control panel
      <FloatIcons />
    </div>
    <div className="mt-[8px] h-5 flex items-center">Layers</div>
    <div className={`${btn} mt-[6px] ml-[1px] h-[24px] !justify-between px-[3px]`}>
      Clipped popp 100km
      <Arrow />
    </div>
    <div className="mt-[6px] h-5 flex items-center">Fields</div>
    <div className="mt-[6px] h-[556px] bg-[#141414]">
      {fields.map(([icon, text]) => (
        <FieldRow key={text} icon={icon} text={text} selected={text === "gid"} />
      ))}
    </div>
    <div className="mt-[8px] h-[23px] flex items-center">
      <div className={`${btn} ml-[1px] w-[44px] h-[23px]`}>Filter</div>
      <span className="ml-[73px]">Columns</span>
    </div>
    <div className="mt-[7px] h-[106px] flex gap-[6px]">
      <div className="w-[112px] bg-[#141414]" />
      <div className="flex-1 bg-[#141414]" />
    </div>
    <div className="mt-[8px] h-5 flex items-center">
      <span className="w-[118px]">Rows</span>
      <span>Value</span>
      <div className="ml-[7px] w-[14px] h-[14px] bg-[#141414]" />
      <span className="ml-[5px]">use NULL values</span>
    </div>
    <div className="mt-[8px] h-[106px] flex gap-[6px]">
      <div className="w-[112px] bg-[#141414]" />
      <div className="flex-1 bg-[#141414] pt-[1px]">
        <FieldRow icon={<Pie />} text="gid" />
        <FieldRow icon={<Bars />} text="count" />
      </div>
    </div>
    <div className="mt-[7px] h-[24px] flex items-center">
      <div className="w-[14px] h-[14px] bg-[#141414]" />
      <span className="ml-[5px]">Use only selected features</span>
      <div className={`${btn} ml-auto w-[78px] h-[24px]`}>Clear</div>
    </div>
    <div className={`${btn} mt-[8px] ml-[1px] h-[24px] text-[#b8b8b8]`}>Calculate</div>
    <div className="absolute left-[14px] top-[505px] h-[17px] border-l-2 border-dotted border-[#5a5a5a]" />
  </div>
);

const StatsTable = () => (
  <div className="w-[493px] ml-[10px] mt-[10px] shrink-0 bg-[#141414] relative">
    <div className="h-[22px] bg-[#191919]" />
    <div className="absolute left-0 top-[22px] bottom-0 w-[13px] bg-[#191919]" />
    <div className="absolute left-[1px] top-0 grid grid-cols-[12px_39px_40px] grid-rows-[22px_29px_29px] gap-[1px] text-[14px] font-bold text-[#d8d8d8]">
      <div className="col-span-2 bg-[#5c5c5c] flex items-center justify-center relative pl-[2px]">
        1
        <div className="absolute right-[6px] top-[7px] border-x-[4px] border-x-transparent border-t-[4px] border-t-[#aaa]" />
      </div>
      <div className="bg-[#5c5c5c] flex items-center justify-center">2</div>
      <div className="bg-[#5c5c5c] flex items-center justify-center">1</div>
      <div className="bg-[#553b7a]" />
      <div className="bg-[#553b7a]" />
      <div className="bg-[#5c5c5c] flex items-center justify-center">2</div>
      <div className="bg-[#553b7a]" />
      <div className="bg-[#553b7a] flex items-center justify-end pr-[4px] text-[13px] font-normal">11</div>
    </div>
  </div>
);

const StatsWindow = () => (
  <div className="w-[821px] h-[1103px] bg-[#1a1a1a] rounded-md flex flex-col overflow-hidden">
    <TitleBar title="Group Stats" />
    <Menu
      className="h-[23px] items-center pl-[11px] pt-[1px] gap-[15px] shrink-0 border-b border-[#1f1f1f]"
      items={[["", "D", "ata"], ["Feat", "u", "res"], ["W", "i", "ndow"], ["He", "l", "p"]]}
    />
    <div className="flex-1 flex min-h-0">
      <StatsTable />
      <ControlPanel />
    </div>
    <div className="h-[36px] shrink-0 flex items-center pt-[10px] text-[13px] text-[#cfcfcf] pl-[7px]">
      Calculate... 100% |&nbsp; generate view...100% |&nbsp; done.
      <div className="ml-auto mr-[2px] self-end mb-[2px]"><Grip /></div>
    </div>
  </div>
);

const Task = ({ active, children }: { active?: boolean; children: ReactNode }) => (
  <div className={`w-[57px] h-[37px] border flex items-center justify-center ${active ? "bg-[#7a5aa8]/70 border-[#8a6ab8]" : "bg-white/20 border-white/40"}`}>
    {children}
  </div>
);

const QgisLogo = ({ size = 36 }: { size?: number }) => (
  <S size={size}>
    <circle cx="11" cy="11" r="8.5" fill="none" stroke="#8fb53a" strokeWidth="4" />
    <path d="M12 12l8 10" stroke="#6f9c2e" strokeWidth="4" />
    <path d="M11 10l3 4" stroke="#ee8a2a" strokeWidth="3" />
  </S>
);

const Cone = ({ size = 36 }: { size?: number }) => (
  <S size={size}>
    <path d="M9.5 2h5l4 16h-13z" fill="#f08a1d" />
    <path d="M8.4 8h7.2l1 4H7.4z" fill="#f5f5f5" />
    <rect x="3" y="18" width="18" height="4" fill="#e88a24" />
  </S>
);

const Edge = ({ size = 36 }: { size?: number }) => (
  <S size={size}>
    <circle cx="12" cy="12" r="11" fill="#1d9fd8" />
    <path d="M4 16c0-6 4-9 9-9s7 3 7 6h-9c0 3 3 5 7 5-4 3-10 3-14-2z" fill="#0b5fa8" />
  </S>
);

const Pdf = ({ size = 36 }: { size?: number }) => (
  <S size={size}>
    <rect x="4" y="1" width="16" height="22" rx="1" fill="#d82c2c" />
    <rect x="17" y="1" width="3" height="22" fill="#eee" />
    <path d="M7 16c3-2 4-6 3-9 1 4 2 6 5 7-3 0-6 1-8 2z" fill="none" stroke="#fff" />
  </S>
);

const Mark = () => <div className="absolute bottom-[3px] w-[12px] h-[3px] rounded-sm bg-[#9a9a9a]" />;

const Dock = () => (
  <div className="h-[45px] ml-[9px] mr-[8px] mt-[9px] bg-[#1c1c1c]/65 rounded-md flex items-center relative">
    <S size={30} className="ml-[10px]">
      <circle cx="12" cy="12" r="11.5" fill="#a7b0ae" />
      <path d="M6 4q5 2 4 6t-5 2M16 5q4 2 3 6t-4 4-2-5z" fill="#6f7a78" />
    </S>
    <div className="ml-[489px] w-[36px] flex justify-center">
      <svg width="36" height="38" viewBox="0 0 36 38">
        <path d="M18 0L36 38q-9-12-13-13 1-6-5-8-6 2-5 8-4 1-13 13z" fill="#1793d1" />
      </svg>
    </div>
    <div className="ml-[9px] flex">
      <Task><Edge size={18} /></Task>
      <Task><Cone size={22} /></Task>
      <div className="w-[57px] h-[37px] bg-[#7a5aa8]/70 flex items-center justify-center relative">
        <div className="absolute right-0 top-0 bottom-0 w-[25px] bg-[#a98ad0]/50 border border-[#a98ad0]" />
        <div className="relative flex gap-[4px] opacity-60"><QgisLogo size={20} /><QgisLogo size={20} /></div>
      </div>
      <Task><Pdf size={20} /></Task>
    </div>
    <div className="ml-[7px] flex items-center">
      <div className="w-[47px] flex justify-center">
        <S size={34}>
          <path d="M12 1l3 3 4-1 1 4 3 3-2 3 2 3-3 2-1 4-4-1-3 2-3-2-4 1-1-4-3-2 2-3-2-3 3-3 1-4 4 1z" fill="#eee" />
          <circle cx="12" cy="12" r="5" fill="#333" />
          <circle cx="12" cy="12" r="3" fill="#2f80d8" />
        </S>
      </div>
      <div className="w-[47px] flex justify-center">
        <div className="w-[28px] h-[34px] rounded-[3px] bg-[#3c3c3c] border-t-[7px] border-[#666] flex items-center justify-center text-[#ddd] text-[14px]">&gt;</div>
      </div>
      <div className="w-[47px] flex justify-center">
        <S size={34}>
          <path d="M3 2h8l2 3h8v18H3z" fill="#f3c23c" />
          <rect x="3" y="8" width="18" height="15" fill="#f8dc6a" />
          <path d="M8 23v-6l4-4 4 4v6z" fill="#1a78c9" />
        </S>
      </div>
      <div className="w-[47px] flex justify-center relative h-[45px] items-center"><Edge size={38} /><Mark /></div>
      <div className="w-[47px] flex justify-center">
        <S size={32}>
          <rect x="3" y="1" width="18" height="22" rx="3" fill="#e44332" />
          <path d="M7 8l4 3 6-4M7 12l4 3 6-4M7 16l4 3 6-4" stroke="#fff" fill="none" strokeWidth="1.4" />
        </S>
      </div>
      <div className="w-[47px] flex justify-center">
        <S size={36}>
          <path d="M12 1l8 8-1 10-7 4-7-5-1-9z" fill="#7a52d8" />
          <path d="M12 1l4 9-4 13-4-13z" fill="#a88af0" />
        </S>
      </div>
      <div className="w-[47px] flex justify-center">
        <div className="w-[30px] h-[34px] rounded-full bg-[#1db05c] flex flex-col items-center justify-center gap-[3px]">
          <div className="w-[15px] h-[2px] bg-[#111]" />
          <div className="w-[13px] h-[2px] bg-[#111]" />
          <div className="w-[11px] h-[2px] bg-[#111]" />
        </div>
      </div>
      <div className="w-[47px] flex justify-center">
        <S size={36}>
          <rect x="10" y="8" width="12" height="14" rx="3" fill="#7b83eb" />
          <circle cx="17" cy="4" r="3" fill="#7b83eb" />
          <circle cx="11" cy="4" r="3" fill="#5059c9" />
          <rect x="2" y="6" width="13" height="13" rx="1" fill="#4b53bc" />
          <path d="M5 9h7M8.5 9v7" stroke="#fff" strokeWidth="1.6" />
        </S>
      </div>
      <div className="w-[47px] flex justify-center relative h-[45px] items-center"><Cone size={38} /><Mark /></div>
      <div className="w-[47px] h-[42px] rounded-md bg-white/15 flex justify-center items-center relative">
        <QgisLogo size={36} />
        <div className="absolute bottom-0 w-[11px] h-[11px] rounded-full bg-white text-[#3a2a80] text-[11px] leading-[10px] text-center font-bold">+</div>
      </div>
      <div className="w-[47px] flex justify-center relative h-[45px] items-center"><Pdf size={38} /><Mark /></div>
      <div className="ml-[19px] w-[36px] flex justify-center">
        <S size={36}>
          <path d="M5 4h14l-2 18H7z" fill="#a8a8a8" />
          <ellipse cx="12" cy="4" rx="7" ry="2.5" fill="#777" />
          <circle cx="12" cy="13" r="3" fill="none" stroke="#2f8fd0" strokeWidth="1.6" />
        </S>
      </div>
    </div>
    <div className="ml-auto mr-[3px] w-[33px] h-[38px] rounded-full bg-[#ee4468] flex items-center justify-center">
      <User size={24} color="#fff" strokeWidth={1.4} />
    </div>
  </div>
);

const Wallpaper = () => (
  <svg viewBox="0 0 1920 1200" className="absolute inset-0 w-full h-full -z-10">
    <defs>
      <linearGradient id="navy" x1="0" x2="1">
        <stop offset="0" stopColor="#222a5e" />
        <stop offset="1" stopColor="#37387a" />
      </linearGradient>
      <linearGradient id="warm" x1="0" x2="1" y1="0" y2="0">
        <stop offset="0" stopColor="#b43f38" />
        <stop offset=".35" stopColor="#8a3050" />
        <stop offset=".7" stopColor="#7a3058" />
        <stop offset="1" stopColor="#8a4fa0" />
      </linearGradient>
      <linearGradient id="cool" x1="0" x2="1">
        <stop offset="0" stopColor="#474a90" />
        <stop offset="1" stopColor="#4f86b8" />
      </linearGradient>
      <linearGradient id="leftv" x1="0" x2="0" y1="0" y2="1">
        <stop offset="0" stopColor="#6a4b8e" />
        <stop offset="1" stopColor="#b43f38" />
      </linearGradient>
    </defs>
    <rect width="1920" height="1200" fill="url(#navy)" />
    <polygon points="0,855 1920,848 1920,1200 0,1200" fill="url(#warm)" />
    <rect x="0" y="855" width="9" height="285" fill="url(#leftv)" />
    <rect x="1908" y="848" width="12" height="78" fill="#8a4fa0" />
    <polygon points="1920,922 1920,1200 1650,1200 1340,1138" fill="url(#cool)" />
  </svg>
);

export default function App() {
  return (
    <div className="relative isolate w-[1920px] h-[1200px] overflow-hidden font-['Noto_Sans',sans-serif]">
      <Wallpaper />
      <TopBar />
      <div className="flex pl-[9px] gap-[11px]">
        <QgisWindow />
        <StatsWindow />
      </div>
      <Dock />
    </div>
  );
}
